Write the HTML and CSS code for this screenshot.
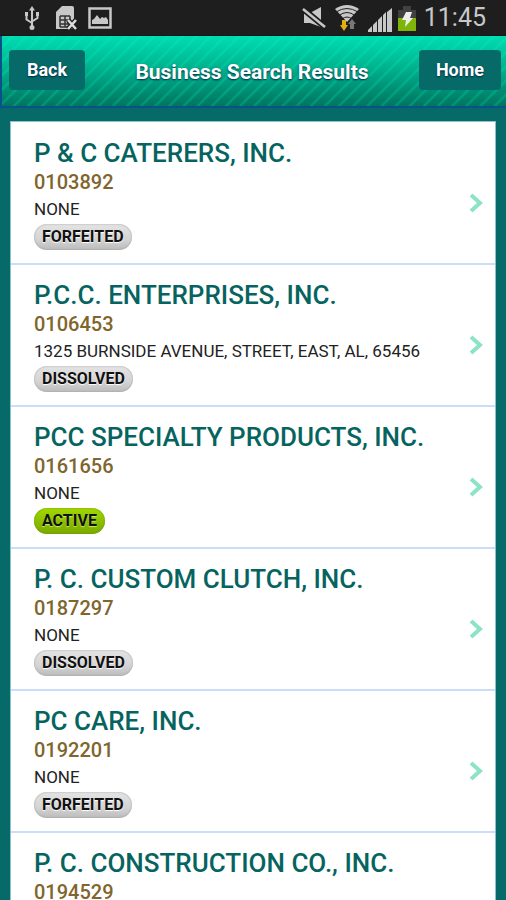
FILE: index.html
```html
<!DOCTYPE html>
<html lang="en">
<head>
<meta charset="utf-8">
<meta name="viewport" content="width=device-width, initial-scale=1">
<title>Business Search Results</title>
<link rel="stylesheet" href="styles.css">
</head>
<body>
<div class="screen">
  <div class="status">
    <div class="status-left">
      <svg class="usb" width="16" height="24" viewBox="0 0 16 24" fill="none" stroke="#c8c8c8" stroke-width="2"><path d="M8 3v18M2.500 8v5.500L8 17M13.500 8v4L8 15.500"/><path d="M8 0l3 4.500H5zM8 19a2.500 2.500 0 1 1 0 5 2.500 2.500 0 0 1 0-5zM1 6h3v4H1zM12 6h3v4h-3z" fill="#c8c8c8" stroke="none"/></svg>
      <svg class="sim" width="22" height="24" viewBox="0 0 22 24"><path d="M6 0h10q2 0 2 2v21H0V6z" fill="#c8c8c8"/><path d="M4 10h10M4 14h10M4 18h9M4 21h8M4 10v11M9 10v11M14 10v6" fill="none" stroke="#333" stroke-width="1.500"/><path d="M12 14l8 9M20 14l-8 9" stroke="#1e1e1e" stroke-width="5"/><path d="M12 14l8 9M20 14l-8 9" stroke="#ddd" stroke-width="2.500"/></svg>
      <svg width="24" height="22" viewBox="0 0 24 22"><path d="M1.500 1.500h21v19h-21z" fill="none" stroke="#c8c8c8" stroke-width="2.500"/><path d="M4 17v-4l2-1 3-4 3 4 2-2 2 1 2-1 2 3v4z" fill="#c8c8c8"/></svg>
    </div>
    <div class="status-right">
      <svg class="mute" width="24" height="22" viewBox="0 0 24 22"><path d="M2 6h6l11-6v20L8 16H2z" fill="#c8c8c8"/><path d="M0 1l23 19" stroke="#1e1e1e" stroke-width="6"/><path d="M1 2l22 18" stroke="#c8c8c8" stroke-width="2.500"/></svg>
      <svg class="wifi" width="26" height="27" viewBox="0 0 26 27"><path d="M1 5q12-8 24 0L13 18z" fill="#c8c8c8"/><path d="M2 8q11-7 22 0M5 11.500q8-6 16 0M8 15q5-4 10 0" fill="none" stroke="#1e1e1e" stroke-width="1"/><path d="M8 16h4v5h2l-4 6-4-6h2z" fill="#e4ad10"/><path d="M16 25v-5h-2l4-5 4 5h-2v5z" fill="#777"/></svg>
      <svg class="signal" width="24" height="24" viewBox="0 0 24 24" fill="#c8c8c8"><path d="M0 24v-2l4-4v6zM5 24v-7l4-4v11zM10 24V12l4-4v16zM15 24V7l3-3v20zM19 24V4l5-4v24z"/></svg>
      <svg class="battery" width="18" height="25" viewBox="0 0 18 25"><path d="M0 4h5V0h8v4h5v8H0z" fill="#414141"/><path d="M0 12h18v13H0z" fill="#7fb50a"/><path d="M8 6h6l-2 6h3L7 21l1-7H4z" fill="#eee"/></svg>
      <span class="clock">11:45</span>
    </div>
  </div>
  <header class="header">
    <button class="nav" type="button">Back</button>
    <h1>Business Search Results</h1>
    <button class="nav home" type="button">Home</button>
  </header>
  <main class="main">
    <ul class="results">
      <li><a href="#r1"><div class="info"><h2>P &amp; C CATERERS, INC.</h2><p class="number">0103892</p><p class="address">NONE</p><span class="badge">FORFEITED</span></div><svg class="chevron" width="16" height="20" viewBox="0 0 16 20"><path d="M3 2l9 8-9 8"/></svg></a></li>
      <li><a href="#r2"><div class="info"><h2>P.C.C. ENTERPRISES, INC.</h2><p class="number">0106453</p><p class="address">1325 BURNSIDE AVENUE, STREET, EAST, AL, 65456</p><span class="badge">DISSOLVED</span></div><svg class="chevron" width="16" height="20" viewBox="0 0 16 20"><path d="M3 2l9 8-9 8"/></svg></a></li>
      <li><a href="#r3"><div class="info"><h2>PCC SPECIALTY PRODUCTS, INC.</h2><p class="number">0161656</p><p class="address">NONE</p><span class="badge active">ACTIVE</span></div><svg class="chevron" width="16" height="20" viewBox="0 0 16 20"><path d="M3 2l9 8-9 8"/></svg></a></li>
      <li><a href="#r4"><div class="info"><h2>P. C. CUSTOM CLUTCH, INC.</h2><p class="number">0187297</p><p class="address">NONE</p><span class="badge">DISSOLVED</span></div><svg class="chevron" width="16" height="20" viewBox="0 0 16 20"><path d="M3 2l9 8-9 8"/></svg></a></li>
      <li><a href="#r5"><div class="info"><h2>PC CARE, INC.</h2><p class="number">0192201</p><p class="address">NONE</p><span class="badge">FORFEITED</span></div><svg class="chevron" width="16" height="20" viewBox="0 0 16 20"><path d="M3 2l9 8-9 8"/></svg></a></li>
      <li><a href="#r6"><div class="info"><h2>P. C. CONSTRUCTION CO., INC.</h2><p class="number">0194529</p></div></a></li>
    </ul>
  </main>
</div>
</body>
</html>
```
FILE: styles.css
```css
* { box-sizing: border-box; }
body { margin: 0; font-family: Roboto, "Liberation Sans", sans-serif; background: #066b68; }
h1, h2, p, ul { margin: 0; padding: 0; }
.screen { height: 100vh; overflow: hidden; display: flex; flex-direction: column; }
.status { flex: none; height: 36px; padding: 0 20px 0 24px; background: #1e1e1e; border-bottom: 1px solid #0a1a18; display: flex; justify-content: space-between; align-items: center; }
.status-left, .status-right { display: flex; align-items: center; }
.usb { margin-right: 16px; }
.sim { margin-right: 10px; }
.mute { margin-right: 8px; }
.wifi { margin-right: 8px; }
.signal { margin: 4px 6px 0 0; }
.battery { margin: 2px 8px 0 0; }
.clock { font-size: 25px; line-height: 36px; color: #c8c8c8; }
.header {
  flex: none;
  height: 72px;
  padding: 14px 5px 0 7px;
  display: flex;
  justify-content: space-between;
  align-items: flex-start;
  border-left: 2px solid #07528a;
  border-bottom: 2px solid #07528a;
  background:
    repeating-linear-gradient(-45deg, transparent 0 6px, rgba(0, 255, 200, .25) 8px, transparent 10px),
    linear-gradient(#00dcb3, #00bd96 35%, #007560);
}
.header h1 { font-size: 21px; font-weight: 700; line-height: 44px; color: #fff; text-shadow: 0 1px 2px #024; }
.nav { width: 76px; height: 40px; border: 0; border-radius: 4px; padding: 0; background: #066b68; color: #fff; font: 700 18px/40px Roboto, "Liberation Sans", sans-serif; text-shadow: 0 1px 2px #024; }
.home { width: 82px; }
.main { flex: 1; min-height: 0; padding: 13px 10px 0; }
.results { list-style: none; padding-top: 1px; background: #fff; border: 1px solid #8fc0cf; }
.results li { border-bottom: 2px solid #c9def8; }
.results a { display: flex; align-items: center; min-height: 140px; padding: 13px 11px 13px 23px; color: #111; text-decoration: none; }
.info { flex: 1; align-self: flex-start; }
.info h2 { font-size: 26px; line-height: 34px; font-weight: 500; color: #066460; }
.number { font-size: 20px; line-height: 24px; font-weight: 500; color: #80652c; }
.address { font-size: 17px; line-height: 30px; color: #222; }
.badge { display: block; width: fit-content; height: 26px; padding: 0 8px; border-radius: 13px; font-size: 16px; line-height: 26px; font-weight: 700; color: #111; background: linear-gradient(#e4e4e4, #d4d4d4 60%, #bbb); text-shadow: 0 1px 1px #fff; box-shadow: inset 0 0 2px #999; }
.badge.active { background: linear-gradient(#a1d800, #79a900); box-shadow: inset 0 0 2px #649000; text-shadow: 0 1px 1px #c8f060; }
.chevron { flex: none; margin-top: 20px; fill: none; stroke: #8de3c8; stroke-width: 4; }
```
